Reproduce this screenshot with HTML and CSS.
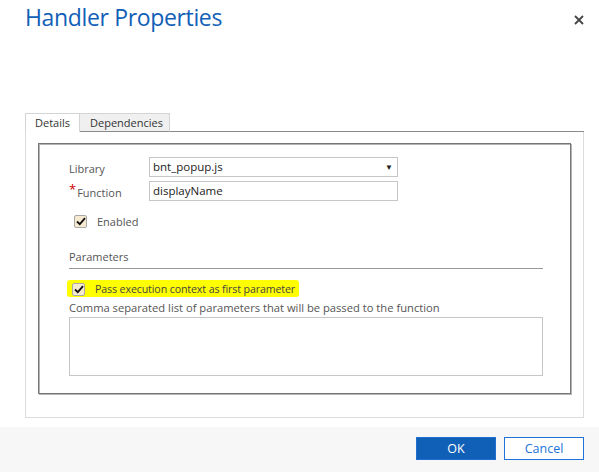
FILE: index.html
```html
<!DOCTYPE html>
<html>
<head>
<meta charset="utf-8">
<link rel="stylesheet" href="styles.css">
</head>
<body>
<div class="dialog">
  <div class="header">
    <h1 class="title">Handler Properties</h1>
    <span class="close">
      <svg width="10" height="10" viewBox="0 0 10 10"><path d="M1 1L9 9M9 1L1 9" stroke="#444" stroke-width="1.8"/></svg>
    </span>
  </div>
  <div class="body">
    <div class="tabs">
      <div class="tab active">Details</div>
      <div class="tab">Dependencies</div>
      <div class="tab-fill"></div>
    </div>
    <div class="panel">
      <div class="fieldset">
        <div class="row">
          <label class="lbl">Library</label>
          <div class="select"><span>bnt_popup.js</span><span class="arrow">▼</span></div>
        </div>
        <div class="row row2">
          <label class="lbl"><span class="req">*</span>Function</label>
          <div class="input">displayName</div>
        </div>
        <div class="check-row">
          <span class="cb"><svg width="10" height="9" viewBox="0 0 10 9"><path d="M1 4.5L3.8 7.2L9 1.2" fill="none" stroke="#111" stroke-width="1.8"/></svg></span>
          <span class="cb-text">Enabled</span>
        </div>
        <div class="section">Parameters</div>
        <div class="rule"></div>
        <div class="check-row hl-row">
          <span class="hl">
            <span class="cb"><svg width="10" height="9" viewBox="0 0 10 9"><path d="M1 4.5L3.8 7.2L9 1.2" fill="none" stroke="#111" stroke-width="1.8"/></svg></span>
            <span class="cb-text">Pass execution context as first parameter</span>
          </span>
        </div>
        <div class="hint">Comma separated list of parameters that will be passed to the function</div>
        <div class="textarea"></div>
      </div>
    </div>
  </div>
  <div class="footer">
    <button class="btn primary">OK</button>
    <button class="btn secondary">Cancel</button>
  </div>
</div>
</body>
</html>
```
FILE: styles.css
```css
* { box-sizing: border-box; }
html, body { margin: 0; padding: 0; background: #fff; }
body { font-family: "Open Sans", "Noto Sans", sans-serif; width: 599px; height: 472px; overflow: hidden; }
.dialog { display: flex; flex-direction: column; height: 472px; }
.header { display: flex; justify-content: space-between; align-items: flex-start; padding: 0 15px 0 25px; height: 113px; }
.title { margin: 0; font-weight: 400; font-size: 23px; line-height: 34px; color: #1160b7; letter-spacing: -0.35px; }
.close { margin-top: 15px; display: flex; }
.body { padding: 0 15px 0 25px; }
.tabs { display: flex; height: 19px; }
.tab { font-size: 11px; color: #333; height: 19px; line-height: 17px; padding: 0 9px; border: 1px solid #d4d4d4; }
.tab.active { width: 55px; background: #fff; border-bottom: none; }
.tab:not(.active) { width: 90px; background: #f0f0f0; border-left: none; border-bottom: 1px solid #8a8a8a; padding-left: 10px; }
.tab-fill { flex: 1; border-bottom: 1px solid #8a8a8a; }
.panel { border: 1px solid #dcdcdc; border-top: none; padding: 11px 12px 23px 12px; height: 286px; }
.fieldset { border: 1px solid #777; box-shadow: inset 1px 1px 0 #b5b5b5, 1px 1px 0 #b5b5b5; height: 251px; padding: 13px 27px 0 30px; }
.row { display: flex; align-items: center; height: 20px; }
.row2 { margin-top: 4px; }
.lbl { width: 80px; font-size: 11px; color: #555; padding-top: 2px; }
.req { color: #c00; font-size: 13px; position: relative; top: -3px; margin-right: 1px; }
.select, .input { width: 249px; height: 20px; border: 1px solid #c6c6c6; font-size: 11.5px; color: #222; line-height: 18px; padding: 0 4px 0 3px; }
.select { display: flex; justify-content: space-between; }
.arrow { font-size: 8px; color: #222; }
.check-row { display: flex; align-items: center; margin-top: 13px; padding-left: 5px; height: 14px; }
.cb { width: 13px; height: 13px; border: 1px solid #a9a9a9; background: #f5ead0; display: inline-flex; align-items: center; justify-content: center; border-radius: 2px; }
.cb-text { font-size: 11px; color: #555; margin-left: 10px; }
.section { font-size: 11px; color: #555; margin-top: 21px; }
.rule { border-top: 1px solid #999; margin-top: 4px; }
.hl-row { margin-top: 11px; padding-left: 0; height: 17px; }
.hl { display: inline-flex; align-items: center; background: #ffff00; padding: 2px 4px 1px 5px; margin-left: -2px; border-radius: 3px; height: 17px; }
.hl .cb-text { color: #444; font-size: 10.6px; letter-spacing: -0.1px; }
.hint { font-size: 11.2px; color: #555; margin-top: 3px; }
.textarea { border: 1px solid #c6c6c6; height: 59px; margin-top: 2px; }
.footer { margin-top: auto; background: #f7f7f7; height: 45px; display: flex; justify-content: flex-end; align-items: flex-start; padding: 10px 15px 0 0; gap: 8px; }
.btn { width: 80px; height: 23px; font-family: inherit; font-size: 12.5px; border: 1px solid; padding: 0; }
.primary { background: #1160b7; color: #fff; border-color: #1d6fd0; }
.secondary { background: #fff; border-color: #1d73d9; color: #1d73d9; }
```
